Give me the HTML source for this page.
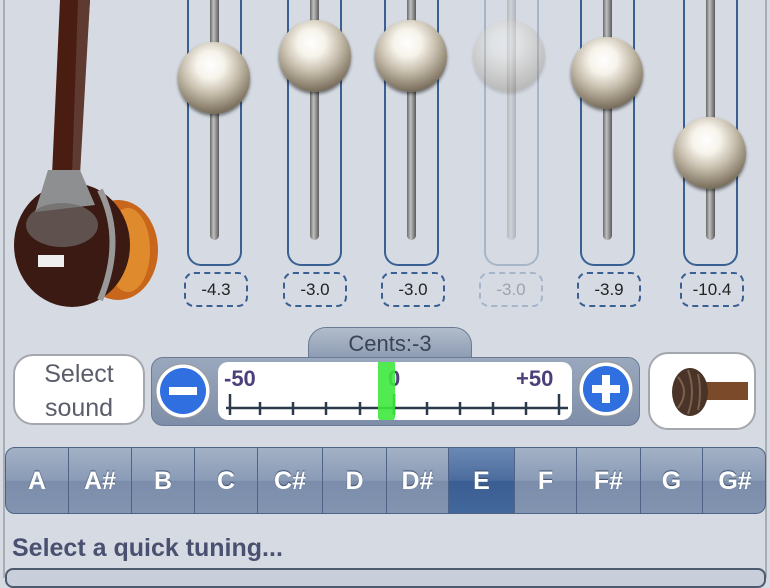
<!DOCTYPE html>
<html><head><style>
*{margin:0;padding:0;box-sizing:border-box}
body{width:770px;height:578px;overflow:hidden;background:#d6dbe3;font-family:"Liberation Sans",sans-serif;position:relative}
.a{position:absolute}
.col{position:absolute;top:-10px;width:55px;height:276px;border:2px solid #3a5f92;border-top:none;border-radius:0 0 14px 14px}
.trk{position:absolute;top:0;width:9px;height:250px;border-radius:0 0 5px 5px;background:linear-gradient(90deg,#6a6a6a,#c0c0c0 40%,#5a5a5a)}
.val{position:absolute;top:272px;width:64px;height:35px;border:2px dashed #3a5f92;border-radius:10px;text-align:center;font-size:17px;line-height:31px;color:#222}
.ball{position:absolute;width:72px;height:72px;border-radius:50%;background:radial-gradient(circle at 45% 32%,#fff 0,#f6f3ea 22%,#c8bfae 45%,#8a7f6c 70%,#3e362c 100%);box-shadow:0 2px 3px rgba(0,0,0,.5)}
.f{opacity:.3}
.note{position:absolute;top:0;height:100%;border-right:1px solid #4e6386;color:#fff;font-size:25px;font-weight:bold;text-align:center;line-height:66px;text-shadow:0 -1px 1px #3a4a66}
</style></head><body>
<div class="a" style="left:3px;top:0;width:2px;height:578px;background:#a9adb4"></div>
<div class="a" style="left:765px;top:0;width:2px;height:578px;background:#a9adb4"></div>
<!-- sitar -->
<svg class="a" style="left:0;top:0" width="170" height="310">
<path d="M60 0 L90 0 L78 175 L52 175 Z" fill="#4a1d12"/>
<path d="M78 0 L90 0 L80 175 L72 175Z" fill="#5e3a30"/>
<ellipse cx="118" cy="250" rx="40" ry="50" fill="#c8661c"/>
<ellipse cx="128" cy="250" rx="22" ry="42" fill="#e08a2e"/>
<ellipse cx="72" cy="245" rx="58" ry="62" fill="#3a1a12"/>
<path d="M48 170 L80 170 L95 205 L35 212 Z" fill="#8d8f90"/>
<ellipse cx="62" cy="225" rx="36" ry="22" fill="#6e6a68" opacity=".7"/>
<rect x="38" y="255" width="26" height="12" fill="#eee"/>
<path d="M100 190 Q125 240 100 300" stroke="#999" stroke-width="6" fill="none"/>
</svg>
<!-- columns -->
<div class="col" style="left:187px"><div class="trk" style="left:21px"></div></div>
<div class="col" style="left:287px"><div class="trk" style="left:21px"></div></div>
<div class="col" style="left:384px"><div class="trk" style="left:21px"></div></div>
<div class="col f" style="left:484px"><div class="trk" style="left:21px"></div></div>
<div class="col" style="left:580px"><div class="trk" style="left:21px"></div></div>
<div class="col" style="left:683px"><div class="trk" style="left:21px"></div></div>
<div class="val" style="left:184px">-4.3</div>
<div class="val" style="left:283px">-3.0</div>
<div class="val" style="left:381px">-3.0</div>
<div class="val f" style="left:479px">-3.0</div>
<div class="val" style="left:577px">-3.9</div>
<div class="val" style="left:680px">-10.4</div>
<div class="ball" style="left:178px;top:42px"></div>
<div class="ball" style="left:279px;top:20px"></div>
<div class="ball" style="left:375px;top:20px"></div>
<div class="ball f" style="left:473px;top:20px"></div>
<div class="ball" style="left:571px;top:37px"></div>
<div class="ball" style="left:674px;top:117px"></div>
<!-- select sound -->
<div class="a" style="left:13px;top:354px;width:132px;height:71px;background:#fff;border:2px solid #a4a7ad;border-radius:20px;text-align:center;font-size:25px;line-height:34px;color:#5a5e6a;padding-top:1px">Select<br>sound</div>
<!-- cents tab -->
<div class="a" style="left:308px;top:327px;width:164px;height:36px;background:linear-gradient(#b2bccb,#8898b0);border:1px solid #6a7a92;border-radius:18px 18px 0 0;text-align:center;font-size:22px;line-height:32px;color:#3a4456">Cents:-3</div>
<div class="a" style="left:151px;top:357px;width:489px;height:69px;background:linear-gradient(#9aa8be,#7e8ea8);border:1px solid #6a7a92;border-radius:12px"></div>
<div class="a" style="left:218px;top:362px;width:354px;height:58px;background:#fff;border-radius:10px"></div>
<svg class="a" style="left:218px;top:362px" width="354" height="58">
<text x="6" y="24" font-family="Liberation Sans" font-weight="bold" font-size="22" fill="#4d3f7a">-50</text>
<text x="170" y="24" font-family="Liberation Sans" font-weight="bold" font-size="22" fill="#4d3f7a">0</text>
<text x="298" y="24" font-family="Liberation Sans" font-weight="bold" font-size="22" fill="#4d3f7a">+50</text>
<path d="M8 46 H350 M12 32V53 M42 40V53 M75 40V53 M108 40V53 M142 40V53 M176 32V53 M209 40V53 M242 40V53 M275 40V53 M308 40V53 M341 32V53" stroke="#2a3a4a" stroke-width="2.5" fill="none"/>
<rect x="160" y="-3" width="17" height="62" rx="4" fill="#3ee83e" opacity=".9"/>
</svg>
<svg class="a" style="left:154px;top:362px" width="60" height="60"><circle cx="29" cy="29" r="27" fill="#fff" stroke="#999" stroke-width="1"/><circle cx="29" cy="29" r="23" fill="#2f6fe0"/><rect x="15" y="25" width="28" height="8" fill="#fff"/></svg>
<svg class="a" style="left:577px;top:360px" width="60" height="60"><circle cx="29" cy="29" r="27" fill="#fff" stroke="#999" stroke-width="1"/><circle cx="29" cy="29" r="23" fill="#2f6fe0"/><rect x="15" y="25" width="28" height="8" fill="#fff"/><rect x="25" y="15" width="8" height="28" fill="#fff"/></svg>
<!-- peg button -->
<div class="a" style="left:648px;top:352px;width:108px;height:78px;background:#fff;border:2px solid #a4a7ad;border-radius:20px"></div>
<svg class="a" style="left:648px;top:352px" width="108" height="78"><rect x="40" y="30" width="60" height="18" fill="#7a4a2a"/><ellipse cx="42" cy="40" rx="18" ry="24" fill="#4a3428"/><path d="M30 25Q42 40 30 56M40 18Q48 40 40 62M50 22Q54 40 50 58" stroke="#7a6050" stroke-width="2" fill="none"/></svg>
<!-- notes -->
<div class="a" style="left:5px;top:447px;width:761px;height:67px;background:linear-gradient(#a3b1c6,#8a9bb6 50%,#7b8daa 51%,#8294b0);border:1px solid #4e6386;border-radius:10px;overflow:hidden">
<div class="note" style="left:0;width:63px">A</div>
<div class="note" style="left:63px;width:63px">A#</div>
<div class="note" style="left:126px;width:63px">B</div>
<div class="note" style="left:189px;width:63px">C</div>
<div class="note" style="left:252px;width:65px">C#</div>
<div class="note" style="left:317px;width:64px">D</div>
<div class="note" style="left:381px;width:62px">D#</div>
<div class="note" style="left:443px;width:66px;background:linear-gradient(#6c89b4,#4a6c9e 50%,#3b5e92 51%,#42679b)">E</div>
<div class="note" style="left:509px;width:62px">F</div>
<div class="note" style="left:571px;width:64px">F#</div>
<div class="note" style="left:635px;width:62px">G</div>
<div class="note" style="left:697px;width:64px;border:none">G#</div>
</div>
<div class="a" style="left:12px;top:534px;font-size:25px;font-weight:bold;color:#4a5070">Select a quick tuning...</div>
<div class="a" style="left:5px;top:568px;width:761px;height:20px;border:2px solid #4e5a6e;border-radius:8px;background:#c8cfda"></div>
</body></html>
